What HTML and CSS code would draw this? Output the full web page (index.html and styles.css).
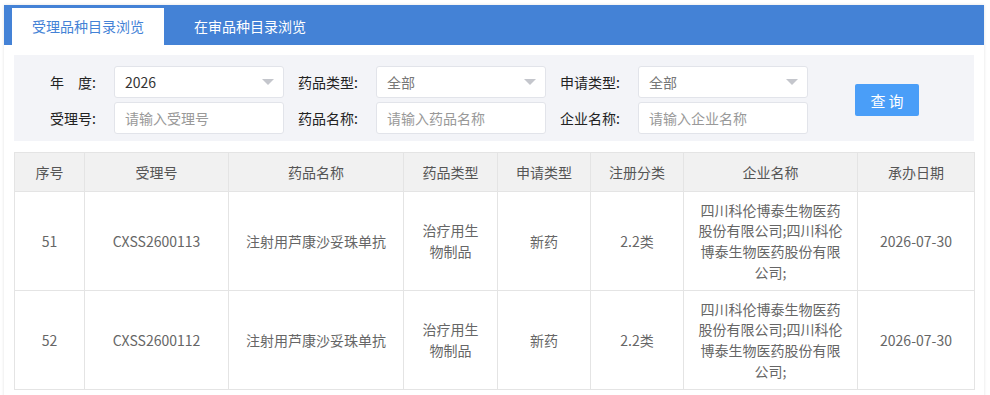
FILE: index.html
```html
<!DOCTYPE html>
<html lang="zh-CN">
<head>
    <meta charset="UTF-8">
    <meta name="viewport" content="width=device-width, initial-scale=1.0">
    <title>受理品种目录浏览</title>
    <link rel="stylesheet" href="styles.css">
</head>
<body>

    <div class="panel">
        <div class="tab-bar">
            <div class="tab active">受理品种目录浏览</div>
            <div class="tab">在审品种目录浏览</div>
        </div>

        <div class="panel-body">
            <form class="filter-box" onsubmit="return false;">
                <label class="filter-label">年　度:</label>
                <div class="select">
                    <span class="select-value">2026</span>
                    <span class="caret"></span>
                </div>
                <label class="filter-label">药品类型:</label>
                <div class="select">
                    <span class="select-value muted">全部</span>
                    <span class="caret"></span>
                </div>
                <label class="filter-label">申请类型:</label>
                <div class="select">
                    <span class="select-value muted">全部</span>
                    <span class="caret"></span>
                </div>
                <div class="btn-cell">
                    <button class="btn-search" type="button">查询</button>
                </div>

                <label class="filter-label">受理号:</label>
                <input class="text-input" type="text" placeholder="请输入受理号">
                <label class="filter-label">药品名称:</label>
                <input class="text-input" type="text" placeholder="请输入药品名称">
                <label class="filter-label">企业名称:</label>
                <input class="text-input" type="text" placeholder="请输入企业名称">
            </form>

            <table class="data-table">
                <colgroup>
                    <col style="width: 70px">
                    <col style="width: 144px">
                    <col style="width: 175px">
                    <col style="width: 94px">
                    <col style="width: 93px">
                    <col style="width: 93px">
                    <col style="width: 174px">
                    <col style="width: 117px">
                </colgroup>
                <thead>
                    <tr>
                        <th>序号</th>
                        <th>受理号</th>
                        <th>药品名称</th>
                        <th>药品类型</th>
                        <th>申请类型</th>
                        <th>注册分类</th>
                        <th>企业名称</th>
                        <th>承办日期</th>
                    </tr>
                </thead>
                <tbody>
                    <tr>
                        <td>51</td>
                        <td>CXSS2600113</td>
                        <td>注射用芦康沙妥珠单抗</td>
                        <td class="narrow">治疗用生物制品</td>
                        <td>新药</td>
                        <td>2.2类</td>
                        <td>四川科伦博泰生物医药股份有限公司;四川科伦博泰生物医药股份有限公司;</td>
                        <td>2026-07-30</td>
                    </tr>
                    <tr>
                        <td>52</td>
                        <td>CXSS2600112</td>
                        <td>注射用芦康沙妥珠单抗</td>
                        <td class="narrow">治疗用生物制品</td>
                        <td>新药</td>
                        <td>2.2类</td>
                        <td>四川科伦博泰生物医药股份有限公司;四川科伦博泰生物医药股份有限公司;</td>
                        <td>2026-07-30</td>
                    </tr>
                </tbody>
            </table>
        </div>
    </div>

</body>
</html>
```

FILE: styles.css
```css
body {
    margin: 0;
    padding: 0;
    background: #fff;
    font-family: "Microsoft YaHei", "Noto Sans CJK SC", sans-serif;
    font-size: 14px;
    color: #333;
}

.panel {
    width: 980px;
    margin: 5px 0 0 4px;
    background: #fff;
    box-shadow: 0 0 3px rgba(0, 0, 0, 0.12);
}

/* tabs */
.tab-bar {
    display: flex;
    gap: 10px;
    height: 40px;
    padding: 3px 0 0 8px;
    box-sizing: border-box;
    background-color: #4482d6;
}

.tab {
    padding: 0 20px;
    line-height: 37px;
    color: #fff;
    font-size: 14px;
    cursor: pointer;
}

.tab.active {
    background-color: #fff;
    color: #4482d6;
}

.panel-body {
    padding: 10px;
}

/* filter */
.filter-box {
    display: grid;
    grid-template-columns: 100px 170px 92px 170px 92px 170px 1fr;
    grid-template-rows: 32px 32px;
    row-gap: 4px;
    align-items: center;
    padding: 11px 0 7px;
    margin: 0;
    background-color: #f3f4f8;
}

.filter-label {
    text-align: right;
    padding-right: 18px;
    color: #222;
}

.select,
.text-input {
    height: 32px;
    box-sizing: border-box;
    background: #fff;
    border: 1px solid #e2e4ea;
    border-radius: 3px;
}

.select {
    display: flex;
    align-items: center;
    justify-content: space-between;
    padding: 0 9px 0 10px;
}

.select-value {
    color: #333;
}

.select-value.muted {
    color: #777;
}

.caret {
    width: 0;
    height: 0;
    border-left: 6px solid transparent;
    border-right: 6px solid transparent;
    border-top: 6px solid #c4c6cc;
}

.text-input {
    width: 100%;
    padding: 0 10px;
    font-family: inherit;
    font-size: 14px;
    color: #333;
    outline: none;
}

.text-input::placeholder {
    color: #999;
}

.btn-cell {
    grid-row: 1 / span 2;
    grid-column: 7;
    padding-left: 47px;
}

.btn-search {
    width: 64px;
    height: 32px;
    border: none;
    border-radius: 2px;
    background-color: #4a9ef8;
    color: #fff;
    font-family: inherit;
    font-size: 15px;
    letter-spacing: 3px;
    text-indent: 3px;
    cursor: pointer;
}

/* table */
.data-table {
    width: 100%;
    margin-top: 11px;
    table-layout: fixed;
    border-collapse: collapse;
    border: 1px solid #e4e4e4;
}

.data-table th,
.data-table td {
    border: 1px solid #e4e4e4;
    text-align: center;
    font-weight: normal;
}

.data-table th {
    background-color: #f1f1f1;
    color: #555;
    line-height: 20px;
    padding: 9px 8px;
}

.data-table td {
    color: #666;
    line-height: 20.75px;
    padding: 7.5px 12px;
}

.data-table td.narrow {
    padding: 7.5px 15px;
}
```
